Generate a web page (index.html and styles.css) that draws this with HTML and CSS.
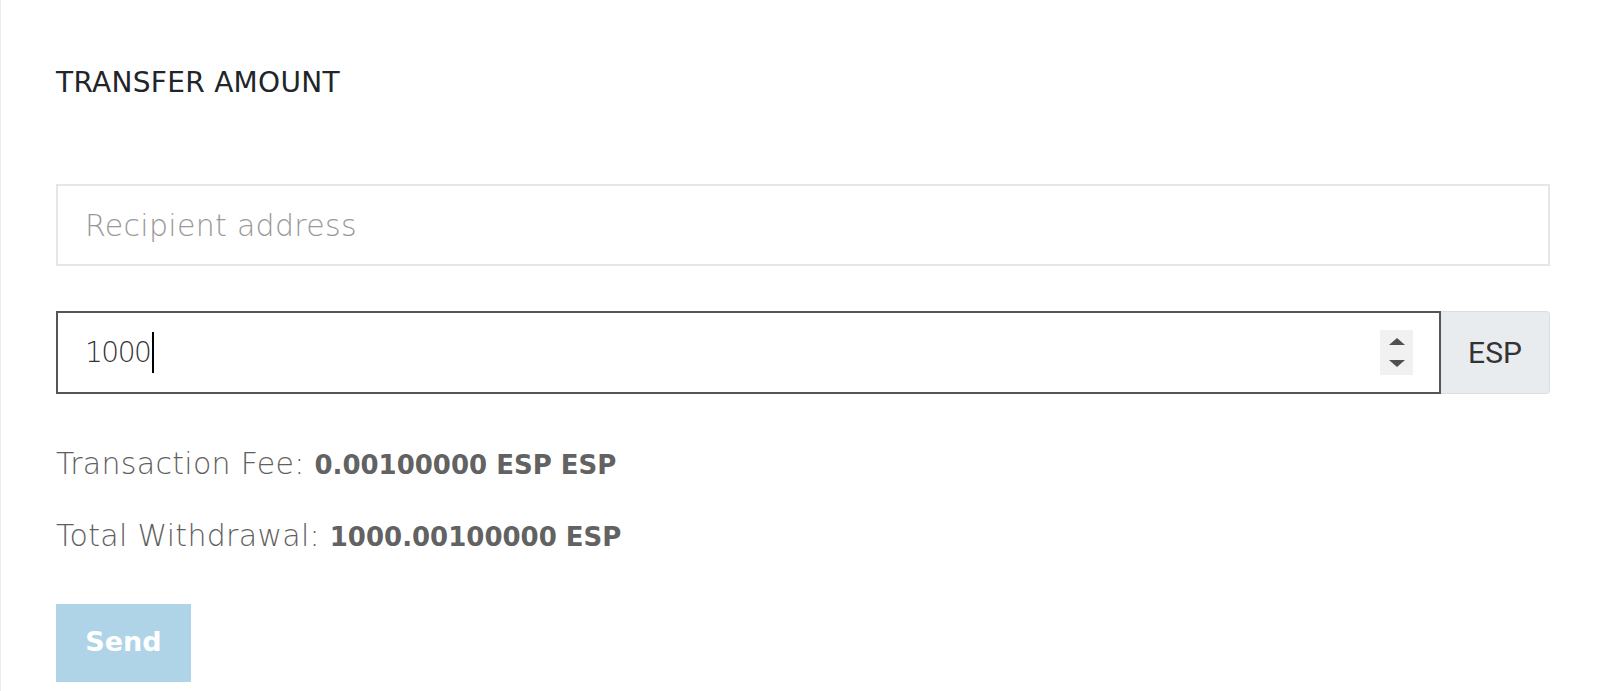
FILE: index.html
```html
<!DOCTYPE html>
<html lang="en">
<head>
<meta charset="utf-8">
<title>Transfer amount</title>
<link rel="stylesheet" href="styles.css">
</head>
<body>
<div class="page">
  <h5 class="title">TRANSFER AMOUNT</h5>
  <div class="form">
    <div class="field placeholder">Recipient address</div>
    <div class="amount-row">
      <div class="amount">
        <span class="value">1000</span><span class="caret"></span>
        <span class="grow"></span>
        <span class="spinner">
          <span class="tri up"></span>
          <span class="tri down"></span>
        </span>
      </div>
      <div class="addon">ESP</div>
    </div>
    <p class="info">Transaction Fee: <b>0.00100000 ESP ESP</b></p>
    <p class="info second">Total Withdrawal: <b>1000.00100000 ESP</b></p>
    <div class="btn">Send</div>
    <p class="error">Insufficient balance to make this transfer</p>
  </div>
</div>
</body>
</html>
```
FILE: styles.css
```css
html, body {
  margin: 0;
  background: #fff;
  overflow: hidden;
}
body {
  font-family: "DejaVu Sans", "Open Sans", sans-serif;
}
.page {
  border-left: 1px solid #ececec;
  height: 691px;
  box-sizing: border-box;
  padding: 0 50px 0 55px;
  overflow: hidden;
}
.title {
  margin: 0;
  padding-top: 63px;
  font-size: 28px;
  letter-spacing: 0.3px;
  line-height: 40px;
  font-weight: 400;
  color: #212529;
}
.form {
  margin-top: 81px;
}
.field {
  height: 82px;
  box-sizing: border-box;
  border: 2px solid #e6e6e9;
  display: flex;
  align-items: center;
  padding-left: 27px;
  font-size: 30px;
  letter-spacing: 0.3px;
  font-weight: 200;
}
.placeholder {
  color: #999;
}
.amount-row {
  display: flex;
  margin-top: 45px;
  height: 83px;
}
.amount {
  flex: 1;
  box-sizing: border-box;
  border: 2px solid #555;
  display: flex;
  align-items: center;
  padding: 0 26px 0 27px;
  font-size: 28px;
  font-weight: 200;
  color: #333;
}
.value {
  letter-spacing: -1.5px;
}
.caret {
  width: 2px;
  height: 41px;
  background: #000;
  margin-left: 2px;
}
.grow {
  flex: 1;
}
.spinner {
  width: 33px;
  height: 45px;
  background: #f1f1f1;
  display: flex;
  flex-direction: column;
  align-items: center;
  justify-content: center;
  gap: 15px;
}
.tri {
  width: 0;
  height: 0;
  border-left: 8px solid transparent;
  border-right: 8px solid transparent;
}
.tri.up {
  border-bottom: 7px solid #505050;
}
.tri.down {
  border-top: 7px solid #505050;
}
.addon {
  width: 109px;
  box-sizing: border-box;
  background: #e9ecef;
  border: 1px solid #dedede;
  border-left: 0;
  border-radius: 0 4px 4px 0;
  display: flex;
  align-items: center;
  justify-content: center;
  font-family: Roboto, "Liberation Sans", sans-serif;
  font-size: 30px;
  color: #333;
}
.info {
  margin: 50px 0 0;
  font-size: 30px;
  letter-spacing: 0.3px;
  line-height: 40px;
  font-weight: 200;
  color: #5f5f5f;
}
.info b {
  font-weight: 700;
  font-size: 26px;
  letter-spacing: 0;
  color: #626262;
}
.info.second {
  margin-top: 31px;
}
.btn {
  margin-top: 47px;
  width: 135px;
  height: 78px;
  padding-bottom: 4px;
  box-sizing: border-box;
  background: #afd4e8;
  color: #fff;
  font-size: 27px;
  font-weight: 700;
  display: flex;
  align-items: center;
  justify-content: center;
}
.error {
  margin: 4px 0 0;
  padding-left: 70px;
  font-size: 24px;
  line-height: 32px;
  color: #e8322a;
  font-weight: 400;
}
```
